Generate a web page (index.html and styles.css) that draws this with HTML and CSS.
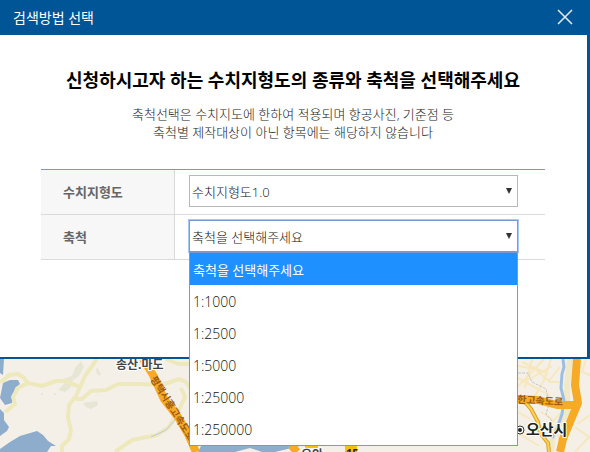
FILE: index.html
```html
<!DOCTYPE html>
<html lang="ko">
<head>
<meta charset="utf-8">
<title>검색방법 선택</title>
<link rel="stylesheet" href="styles.css">
</head>
<body>
<section class="dialog" role="dialog" aria-labelledby="dialog-title">
  <header class="dialog-header">
    <h1 id="dialog-title" class="dialog-title">검색방법 선택</h1>
    <button class="close" type="button" aria-label="닫기">
      <svg width="16" height="16" viewBox="0 0 16 16"><path d="M1 1L15 15M15 1L1 15"/></svg>
    </button>
  </header>
  <div class="dialog-body">
    <h2 class="heading">신청하시고자 하는 수치지형도의 종류와 축척을 선택해주세요</h2>
    <p class="guide">축척선택은 수치지도에 한하여 적용되며 항공사진, 기준점 등<br>축척별 제작대상이 아닌 항목에는 해당하지 않습니다</p>
    <div class="form">
      <div class="row">
        <label class="label" for="kind">수치지형도</label>
        <div class="field">
          <div class="picker">
            <select id="kind" class="select"><option>수치지형도1.0</option></select>
            <svg class="arrow" width="6" height="6" viewBox="0 0 6 6"><path d="M0 0H6L3 6Z"/></svg>
          </div>
        </div>
      </div>
      <div class="row">
        <label class="label" for="scale">축척</label>
        <div class="field">
          <div class="picker">
            <select id="scale" class="select select-open"><option>축척을 선택해주세요</option></select>
            <svg class="arrow" width="6" height="6" viewBox="0 0 6 6"><path d="M0 0H6L3 6Z"/></svg>
            <ul class="menu" role="listbox" aria-label="축척">
              <li class="item item-selected" role="option" aria-selected="true">축척을 선택해주세요</li>
              <li class="item" role="option">1:1000</li>
              <li class="item" role="option">1:2500</li>
              <li class="item" role="option">1:5000</li>
              <li class="item" role="option">1:25000</li>
              <li class="item" role="option">1:250000</li>
            </ul>
          </div>
        </div>
      </div>
    </div>
  </div>
</section>
<div class="map">
  <svg class="map-svg" width="590" height="93" viewBox="0 359 590 93" preserveAspectRatio="xMinYMin slice">
    <rect y="359" width="590" height="93" fill="#f4f0e8"/>
    <g fill="#8eaccc">
      <path d="M0 359H4L3 375L0 373ZM3 383L10 380L18 380L20 384L15 388L13 397L12 403L5 405L0 398ZM0 409L4 413V420L9 427L7 431L0 436Z"/>
      <path d="M0 452V449L10 442L20 436L37 431L43 435L48 441L56 446L51 446L47 452Z"/>
      <path d="M198 452L201 446H300L275 452H262L250 448L235 452Z"/>
    </g>
    <g fill="#e7e5d3">
      <path d="M81 361L84 367L79 376L73 380L70 388L65 392L58 390L64 384L63 379L72 376L75 368Z"/>
      <path d="M97 367L101 374L99 376L96 372ZM83 403L97 401L98 405L91 409L86 407Z"/>
      <circle cx="42" cy="394" r="1"/><circle cx="55" cy="394" r="1"/>
    </g>
    <g class="minor">
      <path d="M0 382L4 380L9 375L18 374L24 378L28 383L42 386L56 381L64 381L78 386M28 383L18 388L13 397L15 404L5 412M97 359L85 376L76 396L69 405L68 418L71 430L69 439L62 446V452M76 399H82L91 391L106 390L118 384L140 384L162 385L179 379L186 382L190 388M181 388L185 397L178 412L169 427L157 435L132 440L115 452M166 359L178 364H190"/>
    </g>
    <path d="M179 409L175 420L166 430L151 437" fill="none" stroke="#b5cbdc"/>
    <g fill="none" stroke="#f7e7bd" stroke-width="2">
      <path d="M518 366L535 369L550 382H563M518 386L530 374L544 359M532 359L525 388M551 359L544 380L535 396M518 378L540 390L550 396M560 367L548 382M528 380L552 366M522 362L548 374M518 412L530 419M518 433L539 446M541 412L552 419M586 359L582 372L590 375M575 427L590 438M590 415L577 424M564 410L551 423L560 440M575 452L590 436"/>
    </g>
    <path d="M518 373L528 373L532 382L546 389L549 404L546 414L552 421" fill="none" stroke="#cbc9c5" stroke-dasharray="3 1"/>
    <path d="M570 359L567 385L567 412L553 434L551 452" fill="none" stroke="#efe9c8" stroke-width="6"/>
    <path d="M563 359L564 367L562 374L561 388L564 400L562 414L557 429L552 438" fill="none" stroke="#9dbde5" stroke-width="3"/>
    <path d="M525 402L531 409L538 422L540 433L548 443L549 452" fill="none" stroke="#d9a030" stroke-width="4"/>
    <path d="M525 402L531 409L538 422L540 433L548 443L549 452" fill="none" stroke="#ffd34d" stroke-width="2"/>
    <path class="highway" d="M143 359L153 375L164 399L178 417L188 434L196 452M518 399L538 400L557 405H575M577 359L575 385L578 403L563 439L560 452M291 445L297 452"/>
    <text class="road-name" transform="translate(150 379) rotate(58)">평택시흥고속도로</text>
    <text class="road-name" transform="translate(517 403) rotate(3)">한고속도로</text>
    <text class="place" x="116" y="369">송산.마도</text>
    <text class="place place-city" x="526" y="435">오산시</text>
    <circle cx="520" cy="430" r="4" fill="#fff" stroke="#333"/>
    <circle cx="520" cy="430" r="2" fill="#222"/>
    <rect x="305" y="445" width="13" height="3" fill="#fdbd0e"/>
    <rect x="345" y="446" width="12" height="6" fill="#fdbd0e"/>
    <text class="badge" x="346" y="457">15</text>
    <text class="place" x="301" y="459">오안</text>
  </svg>
</div>
</body>
</html>
```
FILE: styles.css
```css
* { box-sizing: border-box; }
body {
  margin: 0;
  background: #f4f0e8;
  color: #222;
  font-family: "Open Sans", "Noto Sans CJK KR", sans-serif;
  font-size: 13px;
}
.dialog {
  position: relative;
  border: solid #005596;
  border-width: 0 3px 2px 0;
  background: #fff;
}
.dialog-header {
  display: flex;
  align-items: center;
  justify-content: space-between;
  height: 35px;
  padding: 0 14px 2px 13px;
  background: #005596;
}
.dialog-title {
  margin: 0;
  color: #fff;
  font-size: 14px;
  font-weight: 400;
}
.close {
  display: flex;
  padding: 0;
  border: 0;
  background: none;
}
.close path { stroke: #e6eef5; stroke-width: 1.5; }
.dialog-body { padding: 32px 42px 97px 41px; }
.heading {
  margin: 0;
  color: #000;
  font-size: 18px;
  font-weight: 700;
  line-height: 26px;
  text-align: center;
}
.guide {
  margin: 12px 0 28px;
  font-weight: 300;
  line-height: 18px;
  text-align: center;
}
.form { border-top: 1px solid #8299b9; }
.row {
  display: grid;
  grid-template-columns: 134px 1fr;
  height: 45px;
  border-bottom: 1px solid #dadada;
}
.label {
  display: flex;
  align-items: center;
  padding: 0 0 2px 22px;
  border-right: 1px solid #dadada;
  background: #f7f7f7;
  color: #666;
  font-weight: 700;
}
.field { padding: 5px 27px 0 14px; }
.picker { position: relative; }
.select {
  display: block;
  width: 100%;
  height: 32px;
  padding: 2px 2px 0;
  border: 1px solid #b8b8b8;
  border-radius: 0;
  appearance: none;
  background: #fff;
  color: #111;
  font: inherit;
  font-weight: 300;
}
.select-open { border-color: #7799d5; outline: 1px solid #a8c7fa; }
.arrow {
  position: absolute;
  top: 13px;
  right: 6px;
  fill: #333;
  pointer-events: none;
}
.menu {
  position: absolute;
  z-index: 2;
  top: 100%;
  right: 0;
  left: 0;
  margin: 0;
  padding: 0;
  border: 1px solid #7799ce;
  background: #fff;
  list-style: none;
}
.item {
  height: 32px;
  padding-left: 3px;
  color: #111;
  font-size: 14px;
  font-weight: 300;
  line-height: 34px;
}
.item-selected {
  background: #1e90ff;
  color: #fff;
  font-size: 13px;
  font-weight: 400;
}
.map { height: 93px; overflow: hidden; }
.map-svg { display: block; width: 100%; }
.minor path { fill: none; stroke: #eee8bd; stroke-width: 4; stroke-linejoin: round; }
.highway { fill: none; stroke: #f7aa26; stroke-width: 8; stroke-linejoin: round; }
.road-name { fill: #9b5a0c; font-size: 10px; font-weight: 700; }
.place { fill: #444; stroke: #fff; stroke-width: 2px; paint-order: stroke; font-size: 12px; font-weight: 700; }
.place-city { fill: #222; font-size: 15px; }
.badge { fill: #222; font-size: 11px; font-weight: 700; }
```
